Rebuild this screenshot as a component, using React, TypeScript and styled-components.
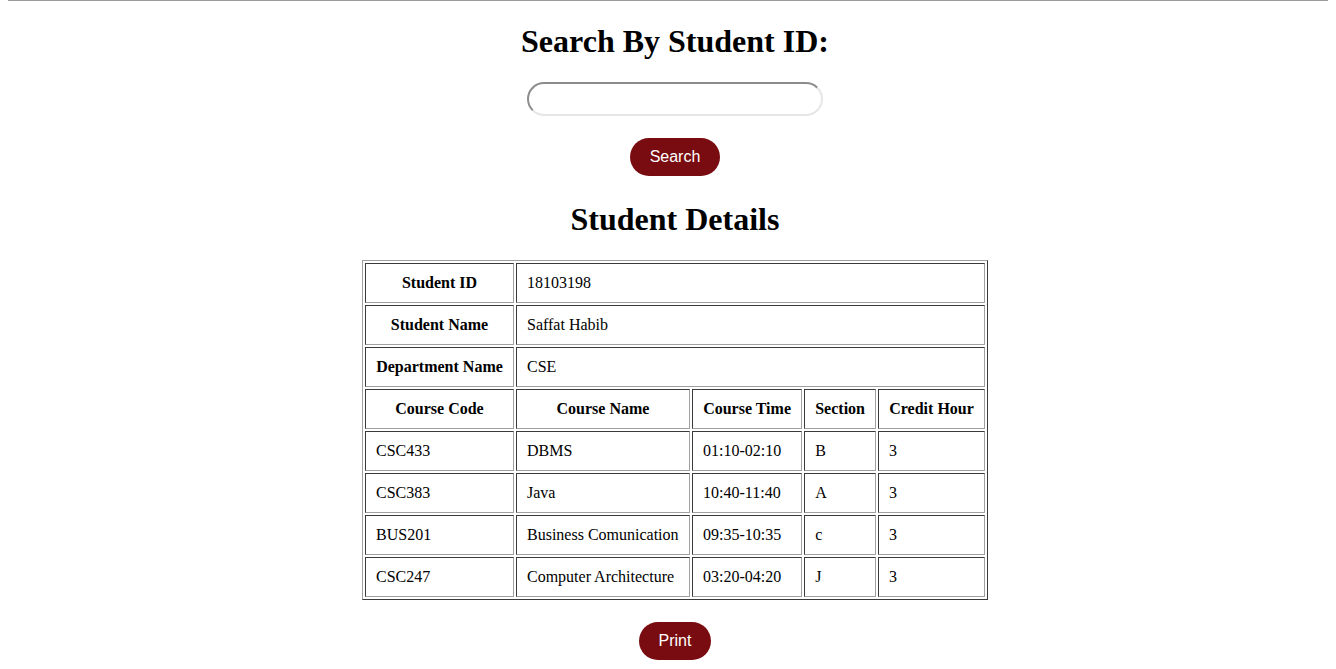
import React from "react";
import styled, { createGlobalStyle } from "styled-components";

const Global = createGlobalStyle`
  html, body { margin: 0; padding: 0; background: #fff; }
  body { font-family: "Liberation Serif", "Times New Roman", serif; color: #000; }
`;

const TopRule = styled.div`
  height: 1px;
  margin: 0 8px;
  background: #9a9a9a;
`;

const Page = styled.main`
  display: flex;
  flex-direction: column;
  align-items: center;
  padding-left: 14px;
`;

const Title = styled.h1<{ $top: number; $bottom: number }>`
  font-family: "Liberation Serif", "Times New Roman", serif;
  font-weight: bold;
  font-size: 32px;
  line-height: 37px;
  margin: ${(p) => p.$top}px 0 ${(p) => p.$bottom}px;
`;

const SearchInput = styled.input`
  box-sizing: border-box;
  width: 296px;
  height: 34px;
  border-radius: 18px;
  border-width: 2px;
  border-style: solid;
  border-color: #8c8c8c #e6e6e6 #e6e6e6 #8c8c8c;
  outline: none;
  padding: 0 12px;
  font-size: 16px;
`;

const Button = styled.button<{ $top: number }>`
  margin-top: ${(p) => p.$top}px;
  height: 38px;
  padding: 0 20px;
  border: none;
  border-radius: 19px;
  background: #790c10;
  color: #fff;
  font-family: "Liberation Sans", Arial, sans-serif;
  font-size: 16px;
  cursor: pointer;
`;

const Table = styled.table`
  width: 626px;
  border: 1px solid;
  border-color: #a0a0a0 #3a3a3a #3a3a3a #a0a0a0;
  border-spacing: 2px;
  font-size: 16px;
  line-height: 18px;
`;

const Cell = styled.td<{ $head?: boolean }>`
  border: 1px solid;
  border-color: #3a3a3a #a0a0a0 #a0a0a0 #3a3a3a;
  padding: 10px;
  font-weight: ${(p) => (p.$head ? "bold" : "normal")};
  text-align: ${(p) => (p.$head ? "center" : "left")};
  white-space: nowrap;
`;

const info = [
  ["Student ID", "18103198"],
  ["Student Name", "Saffat Habib"],
  ["Department Name", "CSE"],
];

const headers = ["Course Code", "Course Name", "Course Time", "Section", "Credit Hour"];

const courses = [
  ["CSC433", "DBMS", "01:10-02:10", "B", "3"],
  ["CSC383", "Java", "10:40-11:40", "A", "3"],
  ["BUS201", "Business Comunication", "09:35-10:35", "c", "3"],
  ["CSC247", "Computer Architecture", "03:20-04:20", "J", "3"],
];

export default function App() {
  return (
    <>
      <Global />
      <TopRule />
      <Page>
        <Title $top={22} $bottom={22}>Search By Student ID:</Title>
        <SearchInput type="text" />
        <Button $top={22}>Search</Button>
        <Title $top={25} $bottom={22}>Student Details</Title>
        <Table>
          <tbody>
            {info.map(([k, v]) => (
              <tr key={k}>
                <Cell as="th" $head>{k}</Cell>
                <Cell colSpan={4}>{v}</Cell>
              </tr>
            ))}
            <tr>
              {headers.map((h) => (
                <Cell as="th" $head key={h}>{h}</Cell>
              ))}
            </tr>
            {courses.map((row) => (
              <tr key={row[0]}>
                {row.map((c, i) => (
                  <Cell key={i}>{c}</Cell>
                ))}
              </tr>
            ))}
          </tbody>
        </Table>
        <Button $top={22}>Print</Button>
      </Page>
    </>
  );
}
